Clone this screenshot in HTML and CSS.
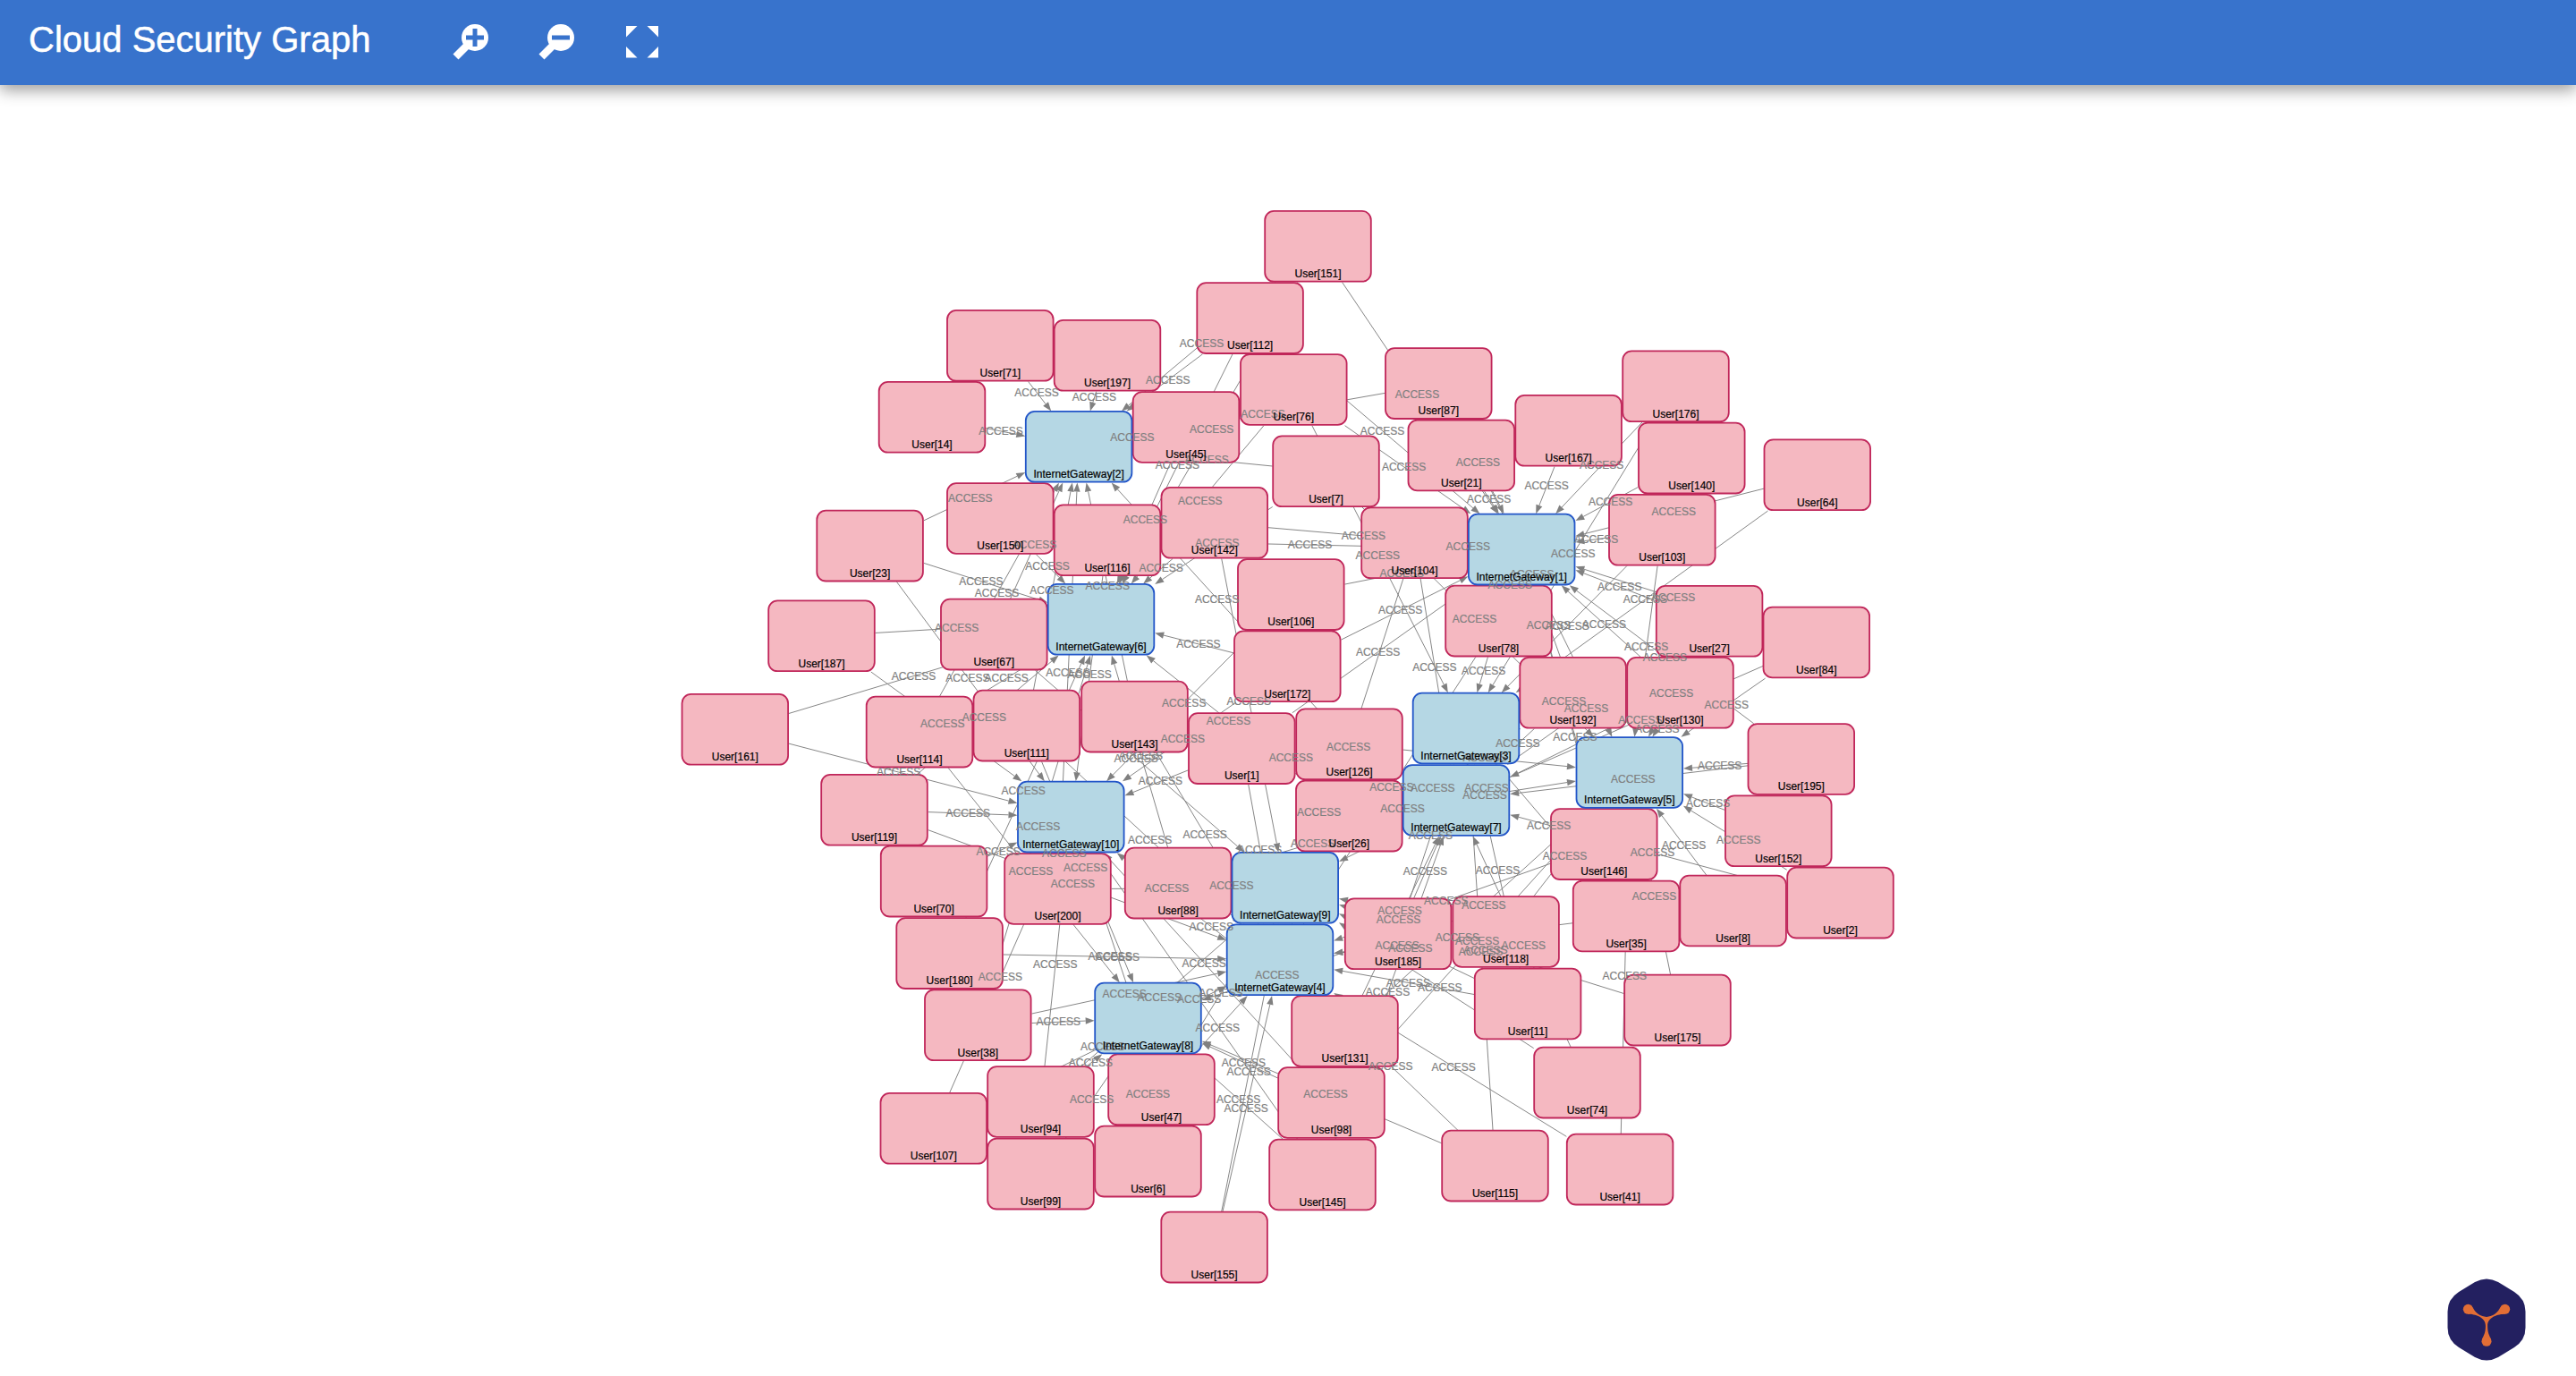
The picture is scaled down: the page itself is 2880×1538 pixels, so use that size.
FILE: index.html
```html
<!DOCTYPE html>
<html lang="en">
<head>
<meta charset="utf-8">
<title>Cloud Security Graph</title>
<link rel="stylesheet" href="styles.css">
</head>
<body>
<header class="toolbar">
  <h1 class="toolbar-title">Cloud Security Graph</h1>
  <nav class="toolbar-actions">
    <button class="tool" aria-label="Zoom in">
      <svg class="tool-icon" viewBox="0 0 40 40">
        <path class="handle" d="M3.5 36.5 L16 24"/>
        <circle cx="25" cy="15" r="15"/>
        <path class="sign" d="M15 15H35M25 5V25"/>
      </svg>
    </button>
    <button class="tool" aria-label="Zoom out">
      <svg class="tool-icon" viewBox="0 0 40 40">
        <path class="handle" d="M3.5 36.5 L16 24"/>
        <circle cx="25" cy="15" r="15"/>
        <path class="sign" d="M15 15H35"/>
      </svg>
    </button>
    <button class="tool" aria-label="Fit to screen">
      <svg class="tool-icon" viewBox="0 0 40 40">
        <path d="M2 2H14.500L2 14.500ZM25.500 2H38V14.500ZM2 25V37.500H14.500ZM38 25V37.500H25.500Z"/>
      </svg>
    </button>
  </nav>
</header>
<main class="canvas">
  <svg class="graph" id="graph" viewBox="0 95 2880 1443"></svg>
</main>
<svg class="brand" viewBox="0 0 88 94">
  <path class="brand-hex" d="M31 5 Q44 -2 57 5 L75 16 Q87.500 24 87.500 38 V56 Q87.500 70 75 78 L57 89 Q44 96 31 89 L13 78 Q.5 70 .5 56 V38 Q.5 24 13 16Z"/>
  <path class="brand-mark" d="M26 30.500 C30 33 30 42 44 44 C58 42 58 33 62 30.500 L65 40.800 C57 40.800 45 44 45.100 54 C45.100 62 47 64 49.200 69.500 L38.800 69.500 C41 64 42.900 62 42.900 54 C43 44 31 40.800 23 40.800Z"/>
  <circle class="brand-mark" cx="23.300" cy="35.300" r="5.500"/>
  <circle class="brand-mark" cx="64.700" cy="35.300" r="5.500"/>
  <circle class="brand-mark" cx="44" cy="71.300" r="5.500"/>
</svg>
<script src="graph.js"></script>
</body>
</html>
```
FILE: styles.css
```css
* { box-sizing: border-box; }
body {
  margin: 0;
  height: 100vh;
  overflow: hidden;
  display: flex;
  flex-direction: column;
  background: #fff;
  font-family: "Liberation Sans", Arial, sans-serif;
}
.toolbar {
  position: relative;
  z-index: 1;
  flex: none;
  height: 95px;
  padding-left: 32px;
  display: flex;
  align-items: center;
  gap: 93px;
  background: #3873cc;
  box-shadow: 0 6px 16px rgba(0, 0, 0, .38);
}
.toolbar-title {
  margin: 0;
  padding-bottom: 7px;
  width: 381px;
  color: #fff;
  font-size: 40px;
  font-weight: 400;
  line-height: 46px;
  white-space: nowrap;
  -webkit-text-stroke: .5px #fff;
}
.toolbar-actions { display: flex; gap: 56px; padding-bottom: 1px; }
.tool {
  width: 40px;
  height: 40px;
  padding: 0;
  border: 0;
  background: none;
}
.tool-icon { display: block; width: 40px; height: 40px; fill: #fff; }
.handle { stroke: #fff; stroke-width: 8.500; }
.sign { stroke: #3873cc; stroke-width: 5; }
.canvas { flex: 1; min-height: 0; }
.graph { display: block; width: 100%; height: 100%; }
.edge { stroke: #808080; stroke-width: .95; }
.arrow { fill: #808080; }
.node { stroke-width: 1.800; }
.user { fill: #f5b8c1; stroke: #c0265a; }
.gateway { fill: #b5d7e4; stroke: #2255c8; }
.label { font-size: 12px; text-anchor: middle; stroke-width: .2; }
.edge-label { fill: #808080; stroke: #808080; }
.node-label { fill: #000; stroke: #000; }
.brand {
  position: fixed;
  right: 56px;
  bottom: 16px;
  width: 88px;
  height: 94px;
}
.brand-hex { fill: #232060; }
.brand-mark { fill: #e26e35; }
```
FILE: graph.js
```js
// Node centres, keyed by resource id.
const users = {
  151: [1473.7, 275.5], 112: [1397.8, 355.8], 71: [1118.5, 386.5], 197: [1238.2, 397.5],
  14: [1042.2, 466.5], 45: [1326.2, 477.7], 76: [1446.5, 435.7], 7: [1482.7, 527],
  87: [1608.5, 428.8], 21: [1634, 509.2], 167: [1753.8, 481.5], 176: [1873.7, 432],
  140: [1891.5, 512.3], 64: [2032, 531], 103: [1858.5, 592.5], 150: [1118.5, 579.7],
  116: [1238.2, 604], 142: [1358, 584.5], 23: [972.8, 610.3], 104: [1581.7, 607],
  106: [1443.5, 664.8], 78: [1675.7, 694.3], 27: [1911.3, 694.5], 84: [2031, 718.2],
  67: [1111.5, 709.3], 187: [918.7, 711], 172: [1439.5, 745], 192: [1758.8, 774.5],
  130: [1878.7, 774.5], 161: [822, 815.5], 114: [1028.2, 818.3], 111: [1148, 811.3],
  143: [1268.7, 801.3], 1: [1388.5, 836.8], 126: [1508.7, 832], 195: [2014, 848.7],
  119: [977.7, 905.5], 26: [1508.5, 912.3], 152: [1988.5, 929], 146: [1793.5, 943.8],
  70: [1044.3, 985.3], 200: [1182.7, 993.7], 88: [1317.3, 987.3], 2: [2057.7, 1009.3],
  8: [1937.8, 1018.2], 35: [1818.3, 1024.2], 118: [1683.8, 1041.7], 185: [1563.3, 1044],
  180: [1061.8, 1065.8], 38: [1093.5, 1146], 11: [1708.3, 1122.2], 175: [1875.7, 1129.3],
  131: [1503.7, 1152.7], 74: [1774.7, 1210.3], 47: [1298.7, 1218], 98: [1488.7, 1232.7],
  94: [1163.7, 1231.7], 107: [1044, 1261.5], 6: [1283.7, 1298.3], 99: [1163.7, 1312.3],
  145: [1478.7, 1313.2], 115: [1671.7, 1303.3], 41: [1811.3, 1307.3], 155: [1357.8, 1394.3]
};
const gateways = {
  1: [1701.4, 614.3], 2: [1206.3, 499.5], 3: [1639.2, 814.2], 4: [1431.2, 1073],
  5: [1822, 863.7], 6: [1231.2, 692.5], 7: [1628.2, 894.7], 8: [1283.7, 1138.2],
  9: [1437, 992.5], 10: [1197.5, 913.3]
};
// Users with ACCESS to each gateway.
const access = {
  1: [151, 112, 76, 87, 21, 167, 142, 116, 106, 104, 176, 140, 64, 103, 78, 172, 192, 130, 1, 195, 27, 84, 146, 35],
  2: [151, 112, 71, 14, 197, 45, 87, 7, 23, 67, 114, 111, 143, 126, 200],
  3: [76, 176, 103, 64, 78, 35, 11, 185, 115],
  4: [118, 35, 146, 11, 115, 41, 1, 143, 104, 78, 119, 111, 180, 38, 47, 107, 155],
  5: [87, 7, 103, 27, 84, 130, 192, 195, 152, 2, 8, 118, 131, 98, 41, 175, 126, 26].filter(id => id !== 192),
  6: [151, 112, 76, 45, 7, 150, 142, 23, 172, 187, 26, 88, 114, 119, 180, 38, 161],
  7: [104, 27, 84, 192, 195, 2, 185, 74, 131, 145, 88, 26, 143],
  8: [185, 115, 114, 111, 94, 99, 6, 98, 145, 38],
  9: [88, 118, 11, 175, 74, 142, 67, 126, 130, 192, 200, 94, 47, 155],
  10: [106, 172, 116, 70, 200, 1, 161, 119, 23, 187, 131, 47, 94, 107, 98, 145]
};

const W = 120, H = 80, HEAD = 10;
const svg = document.getElementById('graph');
const layer = () => svg.appendChild(document.createElementNS(svg.namespaceURI, 'g'));
const [edgeLayer, nodeLayer, edgeText, nodeText] = [layer(), layer(), layer(), layer()];

function add(parent, name, attrs, text) {
  const el = document.createElementNS(svg.namespaceURI, name);
  for (const key in attrs) el.setAttribute(key, attrs[key]);
  if (text) el.textContent = text;
  parent.appendChild(el);
}

function addEdge([sx, sy], [tx, ty]) {
  const dx = tx - sx, dy = ty - sy, len = Math.hypot(dx, dy);
  const ux = dx / len, uy = dy / len;
  const inset = Math.min(W / 2 / Math.abs(ux || 1e-6), H / 2 / Math.abs(uy || 1e-6));
  let lx = (sx + tx) / 2, ly = (sy + ty) / 2;
  if (len - 2 * inset > 5) {
    const px = tx - ux * inset, py = ty - uy * inset;
    const bx = px - ux * HEAD, by = py - uy * HEAD;
    add(edgeLayer, 'line', { class: 'edge', x1: sx + ux * inset, y1: sy + uy * inset, x2: bx, y2: by });
    add(edgeLayer, 'path', {
      class: 'arrow',
      d: `M${px} ${py}L${bx - uy * 3.7} ${by + ux * 3.7}L${bx + uy * 3.7} ${by - ux * 3.7}Z`
    });
    lx -= ux * HEAD / 2;
    ly -= uy * HEAD / 2;
  }
  add(edgeText, 'text', { class: 'label edge-label', x: lx - .3, y: ly + 4.1 }, 'ACCESS');
}

function addNode(kind, title, [x, y]) {
  add(nodeLayer, 'rect', {
    class: `node ${kind}`, x: x - W / 2 + .5, y: y - H / 2 + .4, width: W - 1.4, height: H - 1.2, rx: 10
  });
  add(nodeText, 'text', { class: 'label node-label', x: x - .2, y: y + 34.6 }, title);
}

for (const gw in access) for (const id of access[gw]) addEdge(users[id], gateways[gw]);
for (const id in users) addNode('user', `User[${id}]`, users[id]);
for (const id in gateways) addNode('gateway', `InternetGateway[${id}]`, gateways[id]);
```
